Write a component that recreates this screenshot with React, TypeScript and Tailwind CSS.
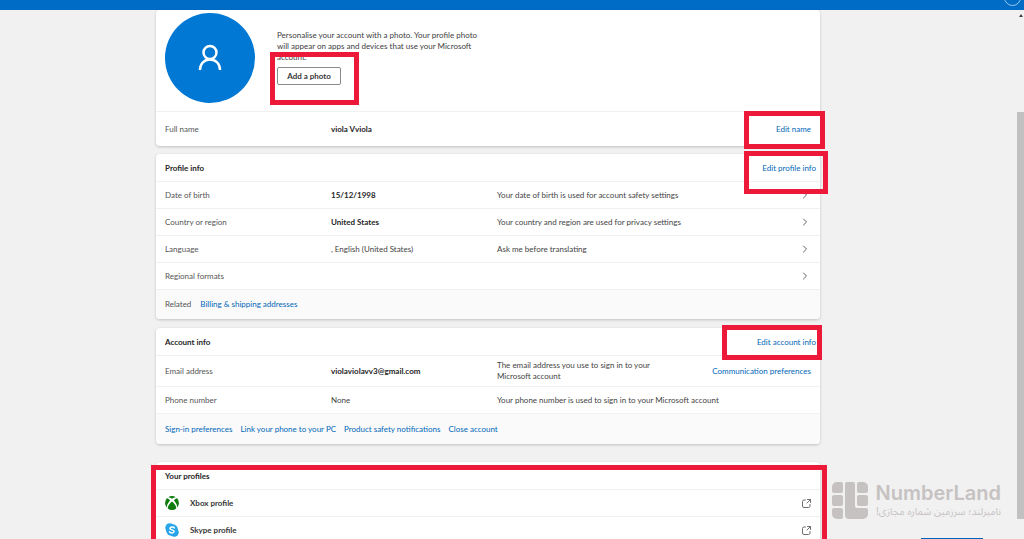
import { ReactNode } from 'react';
import { ChevronRight } from 'lucide-react';

const profileRows = [
  {
    label: 'Date of birth',
    value: '15/12/1998',
    strong: true,
    hint: 'Your date of birth is used for account safety settings',
  },
  {
    label: 'Country or region',
    value: 'United States',
    strong: true,
    hint: 'Your country and region are used for privacy settings',
  },
  {
    label: 'Language',
    value: ', English (United States)',
    strong: false,
    hint: 'Ask me before translating',
  },
  { label: 'Regional formats', value: '', strong: false, hint: '' },
];

const accountLinks = [
  'Sign-in preferences',
  'Link your phone to your PC',
  'Product safety notifications',
  'Close account',
];

function Card({ children }: { children: ReactNode }) {
  return (
    <section className="overflow-hidden rounded-[4px] bg-white shadow-[0_1px_3px_rgba(0,0,0,0.2)]">
      {children}
    </section>
  );
}

function TextLink({ children }: { children: ReactNode }) {
  return (
    <a href="#" className="whitespace-nowrap text-[#0067b8] hover:underline">
      {children}
    </a>
  );
}

function CardHeader({ title, action }: { title: string; action?: string }) {
  return (
    <div className="flex h-[27px] items-center justify-between pt-0.5 pr-1 pl-[9px]">
      <h2 className="font-bold text-[#262626]">{title}</h2>
      {action && <TextLink>{action}</TextLink>}
    </div>
  );
}

interface RowProps {
  label: string;
  value: string;
  strong?: boolean;
  hint?: ReactNode;
  action?: ReactNode;
  className: string;
}

function Row({ label, value, strong, hint, action, className }: RowProps) {
  return (
    <div
      className={`grid grid-cols-[1fr_1fr_2fr] items-center border-t border-[#f1f1f1] ${className}`}
    >
      <span className="pl-[9px] text-[#555]">{label}</span>
      <span
        className={`pl-[9px] ${strong ? 'font-bold text-[#262626]' : 'text-[#444]'}`}
      >
        {value}
      </span>
      <div className="flex items-center justify-between px-[9px]">
        <span className="text-[#444]">{hint}</span>
        {action}
      </div>
    </div>
  );
}

function XboxLogo() {
  return (
    <svg viewBox="0 0 24 24" className="size-[14px]" fill="#107c10">
      <path d="M5 2.400A12 12 0 0 1 12 0a12 12 0 0 1 7 2.400C16 1.900 12 4.800 12 4.800S8 1.900 5 2.400Z" />
      <path d="M3.200 4C5 3.800 7.500 6 8.700 7.500 5 11.500 2.500 16.500 3 20A12 12 0 0 1 3.200 4Z" />
      <path d="M20.800 4C19 3.800 16.500 6 15.300 7.500 19 11.500 21.500 16.500 21 20A12 12 0 0 0 20.800 4Z" />
      <path d="M12 9.500C15.500 12.300 19.800 17.500 19.200 21.500A12 12 0 0 1 4.800 21.500C4.200 17.500 8.500 12.300 12 9.500Z" />
    </svg>
  );
}

function SkypeLogo() {
  return (
    <svg viewBox="0 0 24 24" className="size-[14px]">
      <circle cx="8" cy="8" r="7.500" fill="#28a8ea" />
      <circle cx="16" cy="16" r="7.500" fill="#28a0e4" />
      <circle cx="12" cy="12" r="10.300" fill="#28a4e8" />
      <path
        d="M16 8.500C15 6.600 9 6 8.500 9c-.4 3.400 7.300 2.200 7.100 5.600-.3 3.200-6.800 2.900-7.800.5"
        fill="none"
        stroke="#fff"
        strokeWidth="2.600"
        strokeLinecap="round"
      />
    </svg>
  );
}

function OpenIcon() {
  return (
    <svg
      viewBox="0 0 18 18"
      className="size-[9px]"
      fill="none"
      stroke="#707070"
      strokeWidth="2"
      strokeLinecap="round"
      strokeLinejoin="round"
    >
      <path d="M7 2H4a3 3 0 0 0-3 3v9a3 3 0 0 0 3 3h9a3 3 0 0 0 3-3v-3" />
      <path d="M11 1h6v6M17 1l-7 7" />
    </svg>
  );
}

function ProfileLink({ icon, label }: { icon: ReactNode; label: string }) {
  return (
    <a
      href="#"
      className="flex h-[27px] items-center border-t border-[#f1f1f1] px-[9px] font-bold text-[#363636]"
    >
      {icon}
      <span className="ml-[11px] flex-1">{label}</span>
      <OpenIcon />
    </a>
  );
}

function Watermark() {
  return (
    <div className="absolute right-[23px] bottom-[20px] flex items-center gap-[7px] text-[#c6c2c2]">
      <svg
        viewBox="0 0 36 37"
        className="h-[37px] w-[36px] shrink-0"
        fill="currentColor"
      >
        <path d="M5 0h4a2 2 0 0 1 2 2v7a2 2 0 0 1-2 2H2a2 2 0 0 1-2-2V5a5 5 0 0 1 5-5Z" />
        <rect x="0" y="13" width="11" height="11" rx="2" />
        <path d="M2 26h7a2 2 0 0 1 2 2v7a2 2 0 0 1-2 2H5a5 5 0 0 1-5-5v-4a2 2 0 0 1 2-2Z" />
        <path d="M15 0h6a2 2 0 0 1 2 2v22a2 2 0 0 0 2 2h9a2 2 0 0 1 2 2v4a5 5 0 0 1-5 5H17a4 4 0 0 1-4-4V2a2 2 0 0 1 2-2Z" />
        <path d="M27 0h4a5 5 0 0 1 5 5v4a2 2 0 0 1-2 2h-7a2 2 0 0 1-2-2V2a2 2 0 0 1 2-2Z" />
        <rect x="25" y="13" width="11" height="11" rx="2" />
      </svg>
      <div className="flex flex-col items-end">
        <span className="font-['Inter',sans-serif] text-[20px] leading-[20px] font-semibold">
          NumberLand
        </span>
        <span
          dir="rtl"
          lang="fa"
          className="font-['Inter','Noto_Sans_Arabic',sans-serif] text-[10px] leading-[16px] whitespace-nowrap"
        >
          نامبرلند؛ سرزمین شماره مجازی!
        </span>
      </div>
    </div>
  );
}

export default function App() {
  return (
    <div className="relative flex h-screen flex-col overflow-hidden bg-[#f1f1f1] font-['Lato','Noto_Sans',sans-serif] text-[8px] leading-[11px]">
      <header className="relative h-[10px] shrink-0 overflow-hidden bg-[#006cc6]">
        <span className="absolute right-[3px] bottom-1 size-[17px] rounded-full border border-[#9cc8ec]" />
      </header>

      <div className="flex min-h-0 flex-1">
        <main className="relative mr-[197px] ml-[156px] min-w-0 flex-1">
          <Card>
            <div className="flex h-[101px] pl-[9px]">
              <div className="mt-[3px] flex size-[90px] shrink-0 items-center justify-center rounded-full bg-[#0078d4]">
                <svg
                  viewBox="0 0 24 28"
                  className="h-[28px] w-[24px]"
                  fill="none"
                  stroke="#fff"
                  strokeWidth="2.500"
                >
                  <circle cx="12" cy="8.500" r="6.500" />
                  <path d="M2 26c0-6 4-10.500 10-10.500S22 20 22 26" />
                </svg>
              </div>
              <div className="mt-5 ml-[22px] w-[206px]">
                <p className="text-[#404040]">
                  Personalise your account with a photo. Your profile photo will
                  appear on apps and devices that use your Microsoft account.
                </p>
                <button className="mt-1 h-[18px] w-[64px] rounded-[2px] border border-[#8a8a8a] bg-white font-bold text-[#363636]">
                  Add a photo
                </button>
              </div>
            </div>
            <Row
              className="h-[35px]"
              label="Full name"
              value="viola Vviola"
              strong
              action={<TextLink>Edit name</TextLink>}
            />
          </Card>

          <div className="mt-2">
            <Card>
              <CardHeader title="Profile info" action="Edit profile info" />
              {profileRows.map((row) => (
                <Row
                  key={row.label}
                  {...row}
                  className="h-[27px]"
                  action={<ChevronRight className="size-[12px] text-[#616161]" />}
                />
              ))}
              <div className="flex h-[30px] items-center gap-[9px] border-t border-[#f1f1f1] bg-[#fafafa] pl-[9px] text-[#555]">
                Related
                <TextLink>Billing &amp; shipping addresses</TextLink>
              </div>
            </Card>
          </div>

          <div className="mt-[9px]">
            <Card>
              <CardHeader title="Account info" action="Edit account info" />
              <Row
                className="h-[31px]"
                label="Email address"
                value="violaviolavv3@gmail.com"
                strong
                hint={
                  <>
                    The email address you use to sign in to your
                    <br />
                    Microsoft account
                  </>
                }
                action={<TextLink>Communication preferences</TextLink>}
              />
              <Row
                className="h-[27px]"
                label="Phone number"
                value="None"
                hint="Your phone number is used to sign in to your Microsoft account"
              />
              <div className="flex h-[31px] items-center gap-2 border-t border-[#f1f1f1] bg-[#fafafa] pl-[9px]">
                {accountLinks.map((link) => (
                  <TextLink key={link}>{link}</TextLink>
                ))}
              </div>
            </Card>
          </div>

          <div className="mt-[18px]">
            <Card>
              <CardHeader title="Your profiles" />
              <ProfileLink icon={<XboxLogo />} label="Xbox profile" />
              <ProfileLink icon={<SkypeLogo />} label="Skype profile" />
            </Card>
          </div>

          {/* highlight frames */}
          <div className="absolute top-[42px] left-[114px] h-[53px] w-[89px] border-5 border-[#ec1939]" />
          <div className="absolute top-[101px] right-[-5px] h-[38px] w-[81px] border-5 border-[#ec1939]" />
          <div className="absolute top-[141px] right-[-8px] h-[43px] w-[84px] border-5 border-[#ec1939]" />
          <div className="absolute top-[315px] right-[-2px] h-[35px] w-[100px] border-5 border-[#ec1939]" />
          <div className="absolute top-[455px] right-[-7px] left-[-5px] h-[90px] border-5 border-[#ec1939]" />
        </main>

        <div className="flex w-[7px] shrink-0 flex-col items-center">
          <span className="mt-1 border-x-2 border-b-3 border-x-transparent border-b-[#404040]" />
          <div className="mt-[95px] mb-5 w-full flex-1 bg-[#c1c1c1]" />
        </div>
      </div>

      <Watermark />
      <div className="absolute right-[41px] bottom-0 h-px w-[62px] bg-[#0067b8]" />
    </div>
  );
}
